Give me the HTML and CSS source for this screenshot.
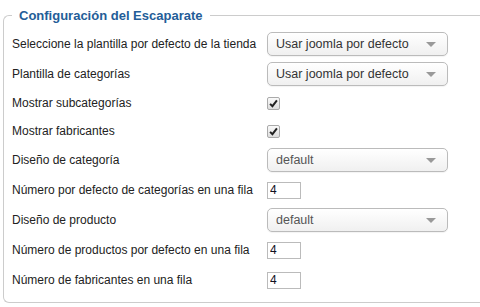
FILE: index.html
```html
<!DOCTYPE html>
<html lang="es">
<head>
    <meta charset="UTF-8">
    <meta name="viewport" content="width=device-width, initial-scale=1.0">
    <title>Configuración del Escaparate</title>
    <link rel="stylesheet" href="styles.css">
</head>
<body>
    <fieldset class="settings">
        <legend>Configuración del Escaparate</legend>

        <div class="row">
            <label for="tpl">Seleccione la plantilla por defecto de la tienda</label>
            <span class="select-wrap">
                <select id="tpl"><option>Usar joomla por defecto</option></select>
            </span>
        </div>
        <div class="row">
            <label for="cattpl">Plantilla de categorías</label>
            <span class="select-wrap">
                <select id="cattpl"><option>Usar joomla por defecto</option></select>
            </span>
        </div>
        <div class="row row-check">
            <label>Mostrar subcategorías</label>
            <span class="check"><svg viewBox="0 0 10 10" width="9" height="9"><path d="M1.2 5.4 L3.8 8 L8.8 1.6" fill="none" stroke="#222" stroke-width="2.2"/></svg></span>
        </div>
        <div class="row row-check">
            <label>Mostrar fabricantes</label>
            <span class="check"><svg viewBox="0 0 10 10" width="9" height="9"><path d="M1.2 5.4 L3.8 8 L8.8 1.6" fill="none" stroke="#222" stroke-width="2.2"/></svg></span>
        </div>
        <div class="row">
            <label for="catlayout">Diseño de categoría</label>
            <span class="select-wrap">
                <select id="catlayout" class="muted"><option>default</option></select>
            </span>
        </div>
        <div class="row">
            <label for="catrow">Número por defecto de categorías en una fila</label>
            <input type="text" id="catrow" class="small" value="4">
        </div>
        <div class="row">
            <label for="prodlayout">Diseño de producto</label>
            <span class="select-wrap">
                <select id="prodlayout" class="muted"><option>default</option></select>
            </span>
        </div>
        <div class="row">
            <label for="prodrow">Número de productos por defecto en una fila</label>
            <input type="text" id="prodrow" class="small" value="4">
        </div>
        <div class="row">
            <label for="manrow">Número de fabricantes en una fila</label>
            <input type="text" id="manrow" class="small" value="4">
        </div>
    </fieldset>
</body>
</html>
```

FILE: styles.css
```css
body {
    margin: 0;
    padding: 0;
    font-family: 'Liberation Sans', Arial, sans-serif;
    font-size: 12px;
    color: #222;
    background-color: #fff;
}
.settings {
    margin: 8px 0 0 3px;
    padding: 6px 0 7px 8px;
    border: 1px solid #ccc;
    border-right: none;
    border-radius: 6px 0 0 6px;
}
.settings legend {
    padding: 0 7px;
    font-size: 13px;
    font-weight: bold;
    line-height: 15px;
    color: #245d98;
}
.row {
    display: flex;
    align-items: center;
    height: 30px;
}
.row-check {
    height: 28px;
}
.row label {
    width: 255px;
    flex: none;
    white-space: nowrap;
}
.select-wrap {
    position: relative;
    display: inline-block;
}
.select-wrap::after {
    content: '';
    position: absolute;
    right: 12px;
    top: 10px;
    border-left: 5px solid transparent;
    border-right: 5px solid transparent;
    border-top: 5px solid #999;
    pointer-events: none;
}
.select-wrap select {
    appearance: none;
    -webkit-appearance: none;
    width: 181px;
    height: 24px;
    padding: 0 8px;
    font-family: 'Liberation Sans', Arial, sans-serif;
    font-size: 12.5px;
    color: #333;
    border: 1px solid #bbb;
    border-radius: 5px;
    background: linear-gradient(#fff, #f0f0f0);
    box-shadow: 0 1px 1px rgba(0, 0, 0, 0.05);
}
.select-wrap select.muted {
    color: #555;
}
.check {
    display: inline-flex;
    align-items: center;
    justify-content: center;
    width: 11px;
    height: 11px;
    border: 1px solid #aaa;
    border-radius: 2px;
    background: linear-gradient(#fafafa, #ddd);
}
.small {
    width: 34px;
    height: 17px;
    box-sizing: border-box;
    padding: 0 2px;
    font-family: 'Liberation Sans', Arial, sans-serif;
    font-size: 12px;
    color: #112;
    border: 1px solid #bbb;
    border-radius: 0;
}
```
